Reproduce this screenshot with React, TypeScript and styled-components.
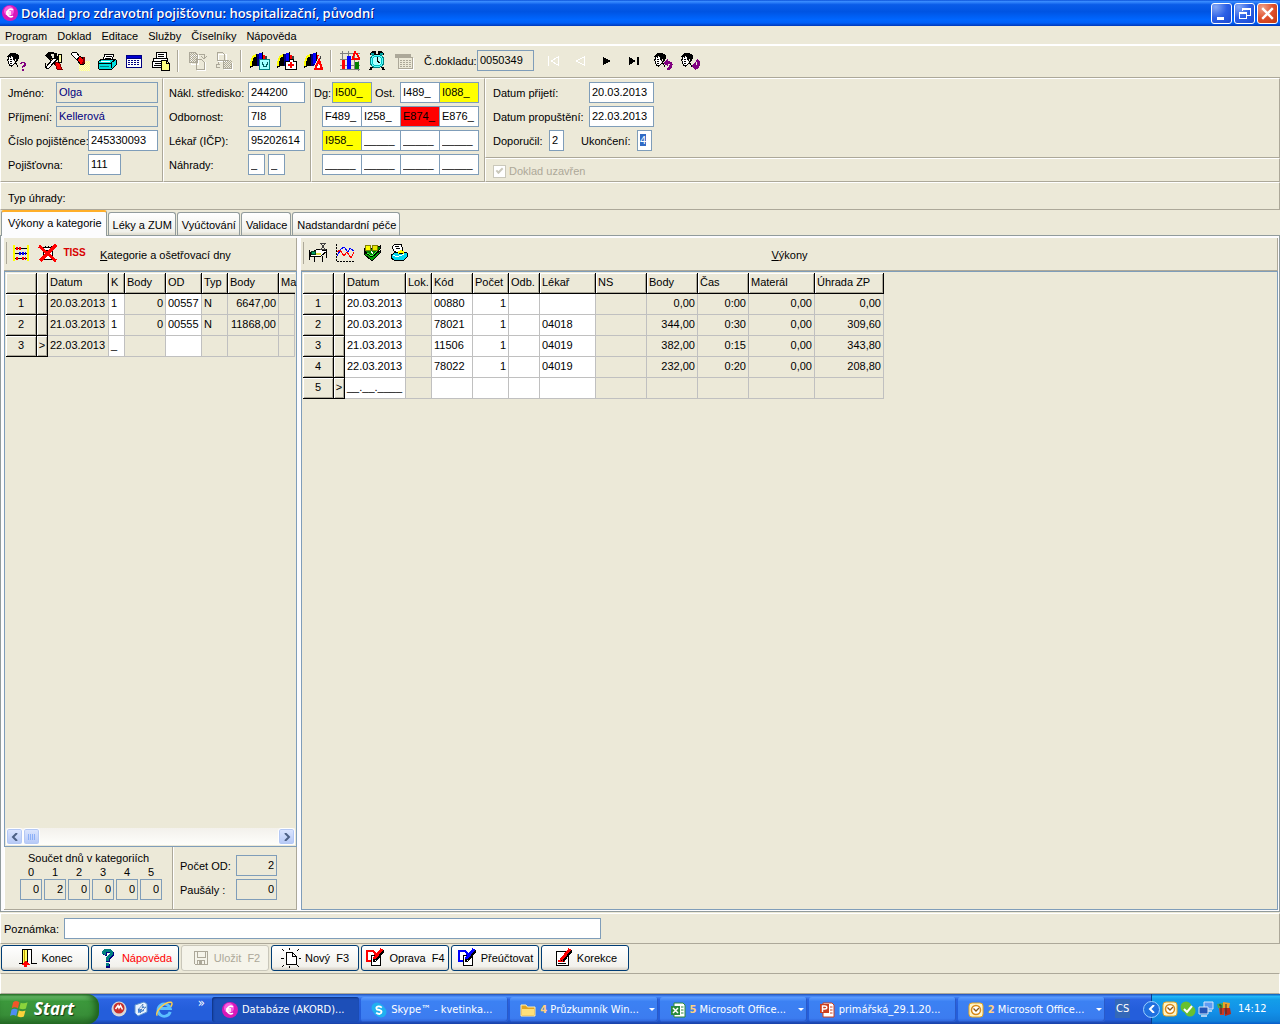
import React, { useEffect, useRef } from "react";
import styled, { createGlobalStyle, css } from "styled-components";

const face = "#ece9d8";
const shade = "#aca899";
const fieldBorder = "#7f9db9";
const uiFont = '"Liberation Sans", Arial, sans-serif';
const shellFont = '"DejaVu Sans Condensed", "DejaVu Sans", Tahoma, sans-serif';

const Global = createGlobalStyle`
  *, *::before, *::after { box-sizing: border-box; }
  body { margin: 0; background: ${face}; color: #000; font: 11px/14px ${uiFont}; }
  button, input { font: inherit; color: inherit; }
  input::selection { background: #316ac5; color: #fff; }
`;

/* ---------- icons ---------- */

type IconProps = { w?: number; h?: number; children: React.ReactNode };
const Icon = ({ w = 20, h = 20, children }: IconProps) => (
  <svg width={w} height={h} viewBox={`0 0 ${w} ${h}`} shapeRendering="crispEdges" fill="none" aria-hidden="true">
    {children}
  </svg>
);

const headRows = [
  "...######....",
  "..#########..",
  ".###########.",
  "####.#######.",
  ".#.#..######.",
  ".#....######.",
  "##.##.##.##..",
  "#......#.##..",
  ".#.##...##...",
  ".#......#....",
  ".#.##..###...",
  "..#...#..#...",
  "..####....#..",
  "....#.....#..",
];
const toPath = (rows: string[], mark: string) =>
  rows
    .flatMap((row, y) => [...row].map((c, x) => (c === mark ? `M${x} ${y}h1v1h-1z` : "")))
    .join("");
const headPath = toPath(headRows, "#");
const Head = () => (
  <g transform="translate(0 2)">
    <path d="M2 4h5v8H2z" fill="#fff" />
    <path d={headPath} fill="#000" />
  </g>
);
const Dither = ({ x, y, w, h, color }: { x: number; y: number; w: number; h: number; color: string }) => {
  let d = "";
  for (let r = 0; r < h; r++) for (let c = r % 2; c < w; c += 2) d += `M${x + c} ${y + r}h1v1h-1z`;
  return <path d={d} fill={color} />;
};

const HeadQuestion = () => (
  <Icon><Head /><path d="M14 11h4v1h1v3h-1v1h-2v1h-1v-2h1v-1h1v-2h-2v1h-2v-1h1zM15 18h2v2h-2z" fill="#800080" /></Icon>
);
const Tools = () => (
  <Icon>
    <path d="M5 5l8 8" stroke="#000" strokeWidth="3" />
    <path d="M6 6l7 7" stroke="#c08040" strokeWidth="1" />
    <path d="M2 4l3-3h6v2H8l1 3-3 3z" fill="#000" />
    <path d="M11 2h3v3h2v3l-3 2-2-2z" fill="#000" />
    <path d="M12 8l-8 9" stroke="#000" strokeWidth="4" />
    <path d="M12 8l-8 9" stroke="#fff" strokeWidth="2" />
    <path d="M2 12v4l3 2 2-2" stroke="#000" />
    <path d="M12 11h4l3 7h-5z" fill="#f00" stroke="#800000" />
    <path d="M15 3h3v8h-3z" fill="#ffffa0" stroke="#000" />
  </Icon>
);
const Flashlight = () => (
  <Icon>
    <path d="M9 10h11v10H9z" fill="#ffff8c" />
    <Dither x={9} y={10} w={11} h={10} color="#fffcc8" />
    <path d="M1 3l2-2h3l4 5-3 3z" fill="#fff" stroke="#000" />
    <path d="M7 9l3-4 5 4-1 4-3 1z" fill="#f00" stroke="#000" />
    <path d="M14 6v5l-2 2" stroke="#800000" strokeWidth="2" />
  </Icon>
);
const Printer = () => (
  <Icon>
    <path d="M6 9l2-6h9l-2 6z" fill="#fff" stroke="#000" />
    <path d="M9 5h6M8 7h6" stroke="#000" />
    <path d="M1 11l4-3h12l2 1v5l-4 4H2l-1-2z" fill="#00e0e0" stroke="#000" />
    <path d="M2 12h12l4-3M14 12v5" stroke="#000" />
    <path d="M3 15h9" stroke="#008080" />
    <path d="M4 10h9" stroke="#fff" />
  </Icon>
);
const TableIcon = () => (
  <Icon>
    <path d="M2 4h16v13H2z" fill="#000080" /><path d="M3 5h14v2H3z" fill="#0000d0" />
    <path d="M3 8h14v8H3z" fill="#fff" />
    <path d="M4 9.500h12M4 11.500h12M4 13.500h12" stroke="#000080" strokeDasharray="2 1" />
  </Icon>
);
const PrintNote = () => (
  <Icon>
    <path d="M5.500 1.500h10v6h-10z" fill="#fff" stroke="#000" /><path d="M7 3.500h6M7 5.500h6" stroke="#000" />
    <path d="M2.500 7.500h14v3h-14zM1.500 10.500h15v6h-15z" fill="#fff" stroke="#000" /><path d="M4 12.500h6M3 14.500h7" stroke="#000" />
    <path d="M10.500 9.500h5l3 3v7h-8z" fill="#ffff80" stroke="#000" /><path d="M15.500 9v3.500H19" stroke="#000" />
  </Icon>
);
const CopyOff = ({ flip }: { flip?: boolean }) => (
  <Icon>
    <path d={flip ? "M4 3h8v7H4z" : "M4 4h7v9H4z"} stroke="#fff" />
    {!flip && <Dither x={2} y={2} w={8} h={9} color="#aca899" />}
    {flip && <Dither x={10} y={9} w={8} h={8} color="#aca899" />}
    <path d={flip ? "M3.500 1.500h5l2 2v6h-7zM9.500 9.500h5l3 3v5h-8z" : "M2.500 1.500h6l2 2v8h-8zM9.500 8.500h5l3 3v7h-8z"} stroke="#aca899" />
    <path d={flip ? "M6 13H2v3h4M4 11v3" : "M12 3h5v4M14 5l3 3 3-3"} stroke="#aca899" />
    <path d={flip ? "M18.500 12v6.500H10" : "M18.500 11v8.500H10"} stroke="#fff" />
  </Icon>
);
const Books = () => (
  <>
    <path d="M0 17V11l2-5 3-3h2v12H4z" fill="#000" />
    <path d="M1 15v-4l2-5 3-2" stroke="#ff0" strokeWidth="2" />
    <path d="M6 3h5v12H6z" fill="#000080" /><path d="M9 2h3v11H9z" fill="#00f" />
    <path d="M6 3v12" stroke="#000" />
    <path d="M13 4h2v8h-2z" fill="#f00" /><path d="M12.500 1v11" stroke="#000" /><path d="M15 5h2v7h-2z" fill="#404040" />
  </>
);
const BooksBox = () => (
  <Icon><Books /><path d="M9.500 8.500h10v10h-10z" fill="#a0ffff" stroke="#008080" /><path d="M12 11v2h1v2h3v-2h1v-2" stroke="#006060" /></Icon>
);
const BooksKit = () => (
  <Icon><Books /><path d="M12.500 8.500h4v2h3v8h-11v-8h4z" fill="#fff" stroke="#000" /><path d="M13 11h2v2h2v2h-2v2h-2v-2h-2v-2h2z" fill="#f00" /></Icon>
);
const BooksTri = () => (
  <Icon><Books /><path d="M15 8l-5 11h9z" fill={face} stroke={face} strokeWidth="3" /><path d="M15 9l-4 9h7z" fill="#fff" stroke="#f00" strokeWidth="2" /></Icon>
);
const GridChart = () => (
  <Icon>
    <path d="M2.500 0v19M8.500 0v19M14.500 0v19M0 2.500h20M0 8.500h12M0 14.500h20M0 18.500h20M18.500 10v10" stroke="#808080" />
    <path d="M2 9h3v9H2z" fill="#f00" /><path d="M7 5h4v13H7z" fill="#00f" /><path d="M15 11h4v7h-4z" fill="#008000" />
    <path d="M15.500 0l-3 8h7l-3-6" stroke="#f00" strokeWidth="2" />
  </Icon>
);
const Alarm = () => (
  <Icon>
    <path d="M3 4l3-3h2v2M17 4l-3-3h-2v2M5 16l-2 3M15 16l2 3" stroke="#000" strokeWidth="2" />
    <circle cx="10" cy="10" r="7" fill="#5ff" stroke="#008080" strokeWidth="1" />
    <circle cx="10" cy="10" r="5" fill="#aff" stroke="#00c0c0" /><path d="M10 6v4l3 2" stroke="#000" /><path d="M7 3h6" stroke="#000" />
    <path d="M4 2h3v2H4zM13 2h3v2h-3z" fill="#00a0a0" />
  </Icon>
);
const WindowOff = () => (
  <Icon>
    <path d="M1.500 3.500h15v3h-15zM4.500 6.500h14v11h-14z" stroke="#aca899" fill={face} /><path d="M2 4h14v2H2z" fill="#aca899" />
    <path d="M5 18.500h14.500V7" stroke="#fff" /><path d="M6 9.500h11M6 11.500h11M6 13.500h11M6 15.500h11" stroke="#aca899" strokeDasharray="2 1" />
  </Icon>
);
const NavIcon = ({ kind }: { kind: "first" | "prev" | "next" | "last" }) => (
  <Icon w={14} h={12}>
    {kind === "first" && <path d="M2.500 1v10M12 2l-7 4 7 4z" stroke="#fff" />}
    {kind === "prev" && <path d="M11 2L3 6l8 4z" stroke="#fff" />}
    {kind === "next" && <path d="M3 2v8l8-4z" fill="#000" />}
    {kind === "last" && <path d="M2 2v8l7-4zM10 2h2v8h-2z" fill="#000" />}
  </Icon>
);
const HeadTurn = ({ down }: { down?: boolean }) => (
  <Icon>
    <Head />
    <path d={down ? "M16 9q4 4 0 7h-2" : "M13 12q5-1 4 3l-3 4"} stroke="#800080" strokeWidth="3" />
    <path d={down ? "M15 11v8l-5-4z" : "M9 12l5-4v7z"} fill="#800080" />
  </Icon>
);
const Abacus = () => (
  <Icon>
    <path d="M2 2h2v16H2zM16 2h2v16h-2z" fill="#ff0" /><path d="M4 5.500h12M4 10.500h12M4 15.500h12" stroke="#000" />
    <path d="M5 5.500h6M5 15.500h3M11 15.500h4" stroke="#f00" strokeWidth="3" strokeDasharray="2 1" /><path d="M8 10.500h7" stroke="#00f" strokeWidth="3" strokeDasharray="2 1" />
  </Icon>
);
const CrossedBox = () => (
  <Icon>
    <path d="M5.500 4.500h9v12h-9z" fill="#fff" stroke="#000" />
    <path d="M5 7.500h10M7 3v2M10 3v2M13 3v2" stroke="#000" /><path d="M1 3l17 15M18 2L2 18" stroke="#f00" strokeWidth="3" />
  </Icon>
);
const Bed = () => (
  <Icon>
    <path d="M1.500 7v10M2 13h11l5-4M6.500 14v5M14.500 13v6M18.500 6v9" stroke="#000" />
    <path d="M2 10l8-4 9 2-6 5H3z" fill="#fff" stroke="#000" /><path d="M3 8h5v4H3z" fill="#004020" /><path d="M4 9h3v2H4z" fill="#00a060" />
    <path d="M8 10h5v2H8z" fill="#e0e040" />
    <path d="M12 .5h6M12 6.500h6M13 1l4 5M17 1l-4 5" stroke="#404040" />
  </Icon>
);
const LineChart = () => (
  <Icon>
    <path d="M1.500 1v17.500H19" stroke="#000" strokeDasharray="2 1" />
    <path d="M2 13l4-7 3-2 4 5 2-4 4 3" stroke="#00f" strokeWidth="1" /><path d="M2 9l3-2 4 6 3-4 4 6 3-6" stroke="#f00" strokeWidth="1" />
  </Icon>
);
const Money = () => (
  <Icon>
    <path d="M2 11l8 7 8-8v-2l-8 6-8-5z" fill="#00a000" stroke="#000" />
    <path d="M2 8l8 6 8-8V3l-8 2-8 1z" fill="#008000" stroke="#000" />
    <path d="M5 10l5 3 6-6" stroke="#40ff40" />
    <circle cx="6" cy="5" r="3" fill="#ff0" stroke="#808000" /><circle cx="13" cy="5" r="3" fill="#e8e800" stroke="#808000" />
    <path d="M9 9l2 1" stroke="#fff" strokeWidth="2" />
  </Icon>
);
const PhonePaper = () => (
  <Icon>
    <path d="M3 4l3-3h6l2 6-3 4-6-3z" fill="#fff" stroke="#000" /><path d="M6 3.500h4M7 5.500h4" stroke="#000" />
    <path d="M2 12l5-3 5 2 3-2 3 1v4l-4 4-9-1-3-2z" fill="#00d8f0" stroke="#000" />
    <path d="M4 12l4 2 7-3" stroke="#fff" /><path d="M9 10l3-2 3 2" stroke="#ff0" strokeWidth="2" />
  </Icon>
);
const Door = () => (
  <Icon>
    <path d="M2 15.500h3.500v-14h9v14H20" stroke="#000" /><path d="M6 2h4v13H6z" fill="#ffff60" /><path d="M10.500 2v14" stroke="#000" /><path d="M11 2h3v13h-3z" fill="#fff" />
    <path d="M7 2v13" stroke="#c0a000" />
    <path d="M7 19h3v-2h3l-4-5-5 5h3z" fill="#f00" />
  </Icon>
);
const Question = () => (
  <Icon>
    <path d="M5 7V4l3-2h5l3 2v4l-4 3v3H8v-4l4-3V5H9v3zM8 16h4v4H8z" fill="#000080" />
    <path d="M4 6V3l3-2h5l3 2v4l-4 3v3H8v-4l4-3V4H8v3zM8 15h3v3H8z" fill="#008080" />
  </Icon>
);
const Disk = () => (
  <Icon>
    <path d="M4.500 3.500h13v13h-12l-1-1zM7.500 4v5h8V4M7.500 16v-4h7v4" stroke="#aca899" />
    <path d="M9 13h3v3H9z" fill="#aca899" />
  </Icon>
);
const NewPage = () => (
  <Icon>
    <path d="M5.500 4.500h6l4 4v8h-10zM11.500 4v4.500H16" fill="#fff" stroke="#000" />
    <path d="M1 1l2 2M8.500 0v2M18 1l-2 2M0 10.500h3M18 10.500h2M1 19l2-2M18 19l-2-2M8.500 18v2" stroke="#000" />
  </Icon>
);
const Edit = ({ color }: { color: string }) => (
  <Icon>
    <path d="M2 3h6l2 2v8H2z" fill="#fff" stroke={color} strokeWidth="2" />
    <path d="M6.500 7.500h9v10h-9z" fill="#fff" stroke="#000" />
    <path d="M10 12l8-10" stroke="#000" strokeWidth="4" /><path d="M9 11l8-10" stroke={color} strokeWidth="3" /><path d="M8 10v4h3z" fill="#000" />
  </Icon>
);
const Correct = () => (
  <Icon>
    <path d="M3.500 3.500h12v14h-12z" fill="#fff" stroke="#000" /><path d="M5 15.500h8" stroke="#000" />
    <path d="M5 13h7" stroke="#f00" strokeWidth="2" /><path d="M9 13l9-11" stroke="#000" strokeWidth="4" /><path d="M8 12l9-11" stroke="#f00" strokeWidth="3" />
  </Icon>
);

const Smooth = ({ children, s = 16 }: { children: React.ReactNode; s?: number }) => (
  <svg width={s} height={s} viewBox="0 0 16 16" fill="none" aria-hidden="true">{children}</svg>
);
const Akord = ({ s }: { s?: number }) => (
  <Smooth s={s}>
    <circle cx="8" cy="8" r="8" fill="#d818b8" /><circle cx="7" cy="6" r="5" fill="#f85ce0" />
    <path d="M11 4.800A3.800 3.800 0 1 0 11 11.200M4 7h5M4 9h5" stroke="#fff" strokeWidth="1.600" />
  </Smooth>
);
const Flag = () => (
  <Smooth s={22}>
    <path d="M3 3q2-1.500 4.500 0l-1 4.500Q4 6 2 7.500z" fill="#f0562a" /><path d="M8.500 3.400q2.500 1 5-.4l-1.200 4.600q-2 1.200-4.800 0z" fill="#8bd33c" />
    <path d="M1.800 8.600q2-1.500 4.500 0L5.200 13Q3 11.600.8 13z" fill="#4d8df5" /><path d="M7.200 9q2.400 1.200 4.800 0l-1.200 4.500q-2.200 1.200-4.700-.2z" fill="#fbd23c" />
  </Smooth>
);
const RedBall = () => (
  <Smooth><circle cx="8" cy="8" r="7.500" fill="#d8d8d8" /><circle cx="8" cy="7" r="5.500" fill="#c8302c" /><path d="M4.500 8L7 4.500 8 7l1.500-2.500 2 4" stroke="#fff" strokeWidth="1.500" /></Smooth>
);
const DesktopIcon = () => (
  <Smooth><path d="M2 4l9-3 3 2v8l-9 4-3-3z" fill="#e8f2ff" stroke="#5e93cf" /><path d="M5 8l6-3v5l-6 2z" fill="#4a8be0" /><path d="M10 3l-5 6 4-1-2 4 6-6-4 1z" fill="#fff" stroke="#245ea8" strokeWidth=".6" /></Smooth>
);
const Explorer = () => (
  <Smooth s={18}>
    <path d="M13.500 10.500A5.500 5.500 0 1 1 13.500 7.500H4.500" stroke="#5cc0ff" strokeWidth="2.600" />
    <path d="M2 14C-1 11 9 1 14.500 2q1.500 1-.5 4" stroke="#ffce4a" strokeWidth="1.300" />
  </Smooth>
);
const SkypeIcon = () => (
  <Smooth><circle cx="6" cy="6" r="5.500" fill="#20b0f0" /><circle cx="10" cy="10" r="5.500" fill="#20b0f0" /><circle cx="8" cy="8" r="6" fill="#20b0f0" />
    <path d="M10.800 5.600Q8.500 3.800 6.500 4.600T6 7.500q4.500.8 4.600 2.200T8.500 12Q6.500 12 5.200 10.600" stroke="#fff" strokeWidth="1.800" /></Smooth>
);
const Folder = () => (
  <Smooth><path d="M1 3h5l1.500 2H15v9H1z" fill="#e0a526" stroke="#fff0b0" /><path d="M2 7h12v6H2z" fill="#ffe07a" /></Smooth>
);
const Office = ({ kind }: { kind: "excel" | "ppt" | "outlook" }) => {
  const color = { excel: "#2c8a3c", ppt: "#cc4020", outlook: "#e8a820" }[kind];
  return (
    <Smooth>
      {kind === "outlook" ? (
        <><rect x="1" y="1" width="14" height="14" rx="3" fill="#fff4c4" stroke={color} /><circle cx="8" cy="8" r="4.500" fill="#fff" stroke="#d88818" strokeWidth="1.500" /><path d="M5.500 6.500l2.500 2.500 3-3" stroke="#8c5810" strokeWidth="1.300" /></>
      ) : (
        <><path d="M4 1h9l2 2v12H4z" fill="#fff" stroke={color} /><path d={kind === "excel" ? "M1 4h9v9H1z" : "M1 2h9v9H1z"} fill={color} />{kind === "excel" ? <path d="M3 6l5 5M8 6l-5 5" stroke="#fff" strokeWidth="1.500" /> : <path d="M3.500 10V4h2.300q2 0 2 1.500T5.800 7H4" stroke="#fff" strokeWidth="1.400" />}<path d="M11 5h2.500M11 8h2.500M11 11h2.500" stroke={color} /></>
      )}
    </Smooth>
  );
};
const CheckBall = () => (
  <Smooth><circle cx="6" cy="6" r="5.500" fill="#68c030" /><circle cx="10" cy="10" r="5.500" fill="#68c030" /><path d="M4 8l3 3 5-6" stroke="#fff" strokeWidth="2" /></Smooth>
);
const Network = () => (
  <Smooth><path d="M6 1h9v7H6z" fill="#5e9cf4" stroke="#dce8f8" /><path d="M1 6h9v7H1z" fill="#2458b8" stroke="#dce8f8" /><path d="M3 15h6M10 10h4" stroke="#dce8f8" strokeWidth="1.500" /></Smooth>
);
const Puzzle = () => (
  <Smooth><path d="M1 3l6-1v5H2z" fill="#48a848" /><path d="M7 1l7 1-1 5H7z" fill="#f0a028" /><path d="M3 7h5v7H4z" fill="#d03820" /><path d="M8 7h6l1 6-6 2z" fill="#b82818" /><path d="M3 4h2v9M10 3v10" stroke="#333" /></Smooth>
);
const Chevron = ({ left, color = "#4d6185" }: { left?: boolean; color?: string }) => (
  <svg width="8" height="8" viewBox="0 0 8 8" fill="none" aria-hidden="true">
    <path d={left ? "M6 0L2 4l4 4" : "M2 0l4 4-4 4"} stroke={color} strokeWidth="2" />
  </svg>
);

/* ---------- window frame ---------- */

const Screen = styled.div`
  min-height: 100vh;
  display: flex;
  flex-direction: column;
`;
const raised = css`
  border: 1px solid;
  border-color: #fff ${shade} ${shade} #fff;
`;
const TitleBar = styled.header`
  display: flex;
  align-items: center;
  gap: 3px;
  height: 26px;
  padding: 0 2px;
  background: linear-gradient(#0a50d8 0%, #3a8cff 6%, #0a5ce8 18%, #0054e3 45%, #0066ff 75%, #0060f8 88%, #0038b8 100%);
  h1 {
    flex: 1;
    margin: 0;
    color: #fff;
    font: 600 13px/18px "Open Sans", "Noto Sans", sans-serif;
    text-shadow: 1px 1px #0a1883;
  }
`;
const CaptionButtons = styled.div`
  display: flex;
  gap: 2px;
`;
const CaptionButton = styled.button<{ $close?: boolean }>`
  display: grid;
  place-items: center;
  width: 21px;
  height: 21px;
  padding: 0;
  border: 1px solid #fff;
  border-radius: 3px;
  background: ${(p) => (p.$close ? "radial-gradient(circle at 25% 20%, #f0a088, #e0502c 50%, #c03810)" : "radial-gradient(circle at 20% 15%, #85a8f5, #2c60e6 50%, #1a48d0)")};
`;
const MenuBar = styled.nav`
  display: flex;
  height: 20px;
  padding: 0 1px;
  border-bottom: 2px solid #fff;
`;
const MenuItem = styled.button`
  padding: 1px 4px 0 4px;
  margin-right: 2px;
  border: 0;
  background: none;
`;
const ToolBar = styled.div`
  display: flex;
  align-items: center;
  height: 32px;
  padding: 0 3px 2px;
  border-bottom: 1px solid ${shade};
`;
const ToolButton = styled.button`
  display: grid;
  place-items: center;
  width: 27px;
  height: 26px;
  padding: 0;
  border: 0;
  background: none;
`;
const Gap = styled.span<{ $line?: boolean; $w?: number }>`
  width: ${(p) => p.$w ?? 9}px;
  height: 22px;
  padding-left: 3px;
  &::before {
    content: "";
    display: ${(p) => (p.$line ? "block" : "none")};
    width: 2px;
    height: 22px;
    border-left: 1px solid ${shade};
    border-right: 1px solid #fff;
  }
`;

/* ---------- form ---------- */

const FormStrip = styled.form`
  display: flex;
  height: 104px;
`;
const FormPanel = styled.fieldset<{ $w?: number; $pad?: string }>`
  ${raised}
  display: flex;
  flex-direction: column;
  gap: 3px;
  min-width: 0;
  margin: 0;
  padding: ${(p) => p.$pad ?? "3px 4px 3px 7px"};
  ${(p) => (p.$w ? `width: ${p.$w}px; flex: none;` : "flex: 1;")}
`;
const DatePanel = styled(FormPanel)`
  flex: none;
  height: 80px;
`;
const Row = styled.div<{ $end?: boolean }>`
  display: flex;
  align-items: center;
  justify-content: ${(p) => (p.$end ? "flex-end" : "flex-start")};
  height: 21px;
`;
const Label = styled.label<{ $w?: number }>`
  flex: none;
  width: ${(p) => (p.$w ? `${p.$w}px` : "auto")};
  white-space: nowrap;
`;
const Field = styled.input<{ $w?: number; $bg?: string; $color?: string; $right?: boolean; $join?: boolean }>`
  width: ${(p) => (p.$w ? `${p.$w}px` : "auto")};
  min-width: 0;
  height: 21px;
  margin: 0 0 0 ${(p) => (p.$join ? "-1px" : "0")};
  padding: 0 2px 2px;
  border: 1px solid ${fieldBorder};
  border-radius: 0;
  outline: none;
  background: ${(p) => p.$bg ?? "#fff"};
  color: ${(p) => p.$color ?? "#000"};
  text-align: ${(p) => (p.$right ? "right" : "left")};
  &[data-grow] { flex: 0 1 537px; }
`;
const Spacer = styled.span<{ $w: number }>`
  width: ${(p) => p.$w}px;
`;
const DateSide = styled.div`
  flex: 1;
  min-width: 0;
  display: flex;
  flex-direction: column;
`;
const CheckPanel = styled.div`
  ${raised}
  display: flex;
  align-items: center;
  flex: 1;
  padding: 2px 0 0 7px;
  color: ${shade};
  label { display: flex; align-items: center; gap: 3px; }
  input {
    appearance: none;
    display: grid;
    place-items: center;
    width: 13px;
    height: 13px;
    margin: 0;
    border: 1px solid #cac8bb;
    background: #fff;
  }
  input:checked::after {
    content: "";
    width: 7px;
    height: 4px;
    border: solid #cac8bb;
    border-width: 0 0 2px 2px;
    transform: rotate(-45deg);
    margin-bottom: 2px;
  }
`;
const PaymentStrip = styled.div`
  ${raised}
  display: flex;
  align-items: center;
  height: 28px;
  padding: 3px 7px 0;
`;

/* ---------- tabs and panes ---------- */

const TabList = styled.div`
  display: flex;
  align-items: flex-end;
  height: 25px;
  padding-left: 1px;
  gap: 1px;
  position: relative;
  z-index: 1;
`;
const Tab = styled.button<{ $active?: boolean }>`
  height: 23px;
  padding: 2px 3px 0 4px;
  border: 1px solid #919b9c;
  border-bottom: 0;
  border-radius: 3px 3px 0 0;
  background: linear-gradient(#fff, #f0f0ea 85%, #dedbcc);
  white-space: nowrap;
  ${(p) =>
    p.$active &&
    css`
      height: 26px;
      margin-bottom: -1px;
      padding: 0 4px 2px 6px;
      border-top: 2px solid #ffae29;
      background: #fcfcfe;
    `}
`;
const TabPane = styled.main`
  flex: 1;
  display: flex;
  gap: 4px;
  padding: 2px 1px 1px 3px;
  border: 1px solid #919b9c;
  background: #fcfcfe;
`;
const Section = styled.section<{ $w?: number }>`
  display: flex;
  flex-direction: column;
  min-width: 0;
  ${(p) => (p.$w ? `width: ${p.$w}px; flex: none;` : "flex: 1;")}
`;
const SectionBar = styled.div`
  display: flex;
  align-items: center;
  height: 33px;
  padding: 0 2px 2px;
  background: ${face};
  border-right: 1px solid ${shade};
  border-bottom: 1px solid ${shade};
  &::before { content: ""; width: 1px; height: 22px; background: ${shade}; }
  h2 { margin: 4px 0 0 12px; font: inherit; white-space: nowrap; }
  h2[data-center] { flex: 1; margin-left: 0; padding-right: 108px; text-align: center; }
`;
const TissLabel = styled.span`
  color: #d80000;
  font: bold 10px/14px ${uiFont};
`;
const GridFrame = styled.div`
  flex: 1;
  display: flex;
  flex-direction: column;
  justify-content: space-between;
  padding: 1px;
  border: 1px solid ${fieldBorder};
  background: ${face};
`;
const DataTable = styled.table`
  flex: none;
  align-self: flex-start;
  table-layout: fixed;
  border-collapse: separate;
  border-spacing: 0;
  th, td {
    height: 21px;
    padding: 0 2px 2px;
    border: solid #c0c0c0;
    border-width: 0 1px 1px 0;
    font-weight: normal;
    text-align: left;
    white-space: nowrap;
  }
  th {
    border-color: #000;
    box-shadow: inset 1px 1px #fff, inset -1px -1px ${shade};
  }
  tbody th { text-align: center; padding: 0 0 2px; }
`;
const Cell = styled.td<{ $white?: boolean; $num?: boolean }>`
  && {
    background: ${(p) => (p.$white ? "#fff" : face)};
    text-align: ${(p) => (p.$num ? "right" : "left")};
  }
`;
const HeadCell = styled.th<{ $open?: boolean }>`
  && {
    ${(p) => p.$open && `border-right: 0; box-shadow: inset 1px 1px #fff, inset 0 -1px ${shade};`}
  }
`;
const ScrollBar = styled.div`
  display: flex;
  height: 17px;
  background: linear-gradient(#f3f1ec, #fefefb);
  button {
    display: grid;
    place-items: center;
    width: 17px;
    height: 17px;
    padding: 0;
    border: 1px solid #fff;
    border-radius: 3px;
    background: linear-gradient(#dce6ff, #b5c8f6);
    box-shadow: inset 0 0 0 1px #b4c8f4;
  }
  button:last-child { margin-left: auto; }
`;
const Totals = styled.div`
  display: flex;
  height: 63px;
`;
const TotalsPanel = styled.div<{ $w?: number }>`
  border: solid ${shade};
  border-width: 0 1px 1px 0;
  box-shadow: inset 1px 0 #fff;
  background: ${face};
  ${(p) => (p.$w ? `width: ${p.$w}px;` : "flex: 1;")}
  display: flex;
  flex-direction: column;
  padding: 4px 10px 0 16px;
`;
const DayTitle = styled.div`
  padding-left: 8px;
`;
const DayBoxes = styled.div`
  display: flex;
  gap: 2px;
  label { display: flex; flex-direction: column; width: 22px; text-align: center; }
`;
const SideTotals = styled(TotalsPanel)`
  padding: 8px 0 0 7px;
  gap: 3px;
`;

/* ---------- bottom ---------- */

const NoteStrip = styled.div`
  ${raised}
  display: flex;
  align-items: center;
  height: 31px;
  margin-top: 1px;
  padding: 0 3px;
`;
const ActionBar = styled.div`
  display: flex;
  gap: 2px;
  height: 29px;
  padding: 1px 1px 2px;
`;
const ActionButton = styled.button<{ $color?: string }>`
  display: flex;
  align-items: center;
  justify-content: center;
  gap: 4px;
  width: 88px;
  height: 26px;
  padding: 0;
  border: 1px solid #003c74;
  border-radius: 3px;
  background: linear-gradient(#fff, #f2f1ec 85%, #d6d0c5);
  color: ${(p) => p.$color ?? "#000"};
  white-space: pre;
  &:disabled { border-color: #c9c7ba; background: #f5f4ea; color: ${shade}; }
`;
const StatusBar = styled.footer`
  height: 21px;
  border: 1px solid;
  border-color: ${shade} #fff ${shade} #fff;
`;

/* ---------- taskbar ---------- */

const TaskBar = styled.div`
  display: flex;
  height: 30px;
  color: #fff;
  font: 11px/14px ${shellFont};
  background: linear-gradient(#1f50b8 0%, #4a8cf8 8%, #2b64e2 18%, #245edb 50%, #245edb 85%, #1941a5 100%);
`;
const StartButton = styled.button`
  display: flex;
  align-items: center;
  gap: 3px;
  width: 99px;
  padding: 0 0 1px 9px;
  border: 0;
  border-radius: 0 12px 12px 0;
  background: linear-gradient(#2f7a2f 0%, #6cc06c 8%, #3c983c 25%, #388e38 70%, #2a702a 100%);
  box-shadow: inset -4px 0 6px #1e601e;
  color: #fff;
  font: italic bold 17px/20px "Open Sans", "Noto Sans", sans-serif;
  text-shadow: 1px 1px 1px #143c14;
`;
const QuickLaunch = styled.div`
  display: flex;
  align-items: center;
  gap: 6px;
  width: 113px;
  padding-left: 12px;
  span { margin: -12px 0 0 auto; padding-right: 7px; font-size: 13px; }
`;
const Tasks = styled.div`
  flex: 1;
  min-width: 0;
  display: grid;
  grid-template-columns: repeat(6, minmax(0, 1fr));
  gap: 2px;
  padding-top: 3px;
`;
const Task = styled.button<{ $active?: boolean }>`
  display: flex;
  align-items: center;
  gap: 4px;
  height: 25px;
  min-width: 0;
  padding: 0 3px 0 10px;
  border: 0;
  border-radius: 3px;
  background: ${(p) => (p.$active ? "#1d4fb8" : "linear-gradient(#5c9cff, #3c81f3 18%, #3c7cf0 85%, #2c62d8)")};
  box-shadow: ${(p) => (p.$active ? "inset 1px 1px 2px #0e3180" : "inset -1px -1px #2a5ac8")};
  color: #fff;
  white-space: nowrap;
  b { color: #ffd080; }
  span { flex: 1; min-width: 0; overflow: hidden; text-align: left; }
  i { border: solid transparent; border-width: 3px 3px 0; border-top-color: #fff; }
`;
const Language = styled.div`
  width: 46px;
  padding: 8px 0 0 10px;
  span { padding: 3px 1px; background: #3468b8; }
`;
const Tray = styled.div`
  display: flex;
  align-items: center;
  gap: 2px;
  width: 129px;
  border-left: 1px solid #0a3e90;
  background: linear-gradient(#0c59b9 0%, #22b8f8 8%, #139ee9 18%, #1290e8 60%, #0f80d8 90%, #095bc9 100%);
  time { margin-left: 4px; }
`;
const TrayArrow = styled.button`
  display: grid;
  place-items: center;
  flex: none;
  width: 17px;
  height: 17px;
  margin-left: -9px;
  padding: 0;
  border: 1px solid #9cd0ff;
  border-radius: 50%;
  background: #2070e0;
`;

/* ---------- data ---------- */

type Column = { name: string; w: number; white?: boolean; num?: boolean; open?: boolean };
const categoryColumns: Column[] = [
  { name: "Datum", w: 61 }, { name: "K", w: 16, white: true }, { name: "Body", w: 41, num: true },
  { name: "OD", w: 36, white: true }, { name: "Typ", w: 26 }, { name: "Body", w: 51, num: true }, { name: "Ma", w: 16, open: true },
];
const categoryRows = [
  ["20.03.2013", "1", "0", "00557", "N", "6647,00", ""],
  ["21.03.2013", "1", "0", "00555", "N", "11868,00", ""],
  ["22.03.2013", "_", "", "", "", "", ""],
];
const actColumns: Column[] = [
  { name: "Datum", w: 61, white: true }, { name: "Lok.", w: 26 }, { name: "Kód", w: 41, white: true },
  { name: "Počet", w: 36, white: true, num: true }, { name: "Odb.", w: 31, white: true }, { name: "Lékař", w: 56, white: true },
  { name: "NS", w: 51 }, { name: "Body", w: 51, num: true }, { name: "Čas", w: 51, num: true },
  { name: "Materál", w: 66, num: true }, { name: "Úhrada ZP", w: 69, num: true },
];
const actRows = [
  ["20.03.2013", "", "00880", "1", "", "", "", "0,00", "0:00", "0,00", "0,00"],
  ["20.03.2013", "", "78021", "1", "", "04018", "", "344,00", "0:30", "0,00", "309,60"],
  ["21.03.2013", "", "11506", "1", "", "04019", "", "382,00", "0:15", "0,00", "343,80"],
  ["22.03.2013", "", "78022", "1", "", "04019", "", "232,00", "0:20", "0,00", "208,80"],
  ["__.__.____", "", "", "", "", "", "", "", "", "", ""],
];

const Grid = ({ columns, rows }: { columns: Column[]; rows: string[][] }) => (
  <DataTable style={{ width: columns.reduce((sum, c) => sum + c.w, 42) }}>
    <colgroup>
      <col width={31} /><col width={11} />
      {columns.map((c, i) => <col key={i} width={c.w} />)}
    </colgroup>
    <thead>
      <tr><th /><th />{columns.map((c, i) => <HeadCell key={i} scope="col" $open={c.open}>{c.name}</HeadCell>)}</tr>
    </thead>
    <tbody>
      {rows.map((row, r) => (
        <tr key={r}>
          <th scope="row">{r + 1}</th>
          <th>{r === rows.length - 1 ? ">" : ""}</th>
          {row.map((v, i) => <Cell key={i} $white={columns[i].white} $num={columns[i].num}>{v}</Cell>)}
        </tr>
      ))}
    </tbody>
  </DataTable>
);

const tools = (items: [string, React.ReactNode, boolean?][]) =>
  items.map(([name, icon, off]) => <ToolButton key={name} type="button" aria-label={name} disabled={off}>{icon}</ToolButton>);

const diagnoses: [string, string?][][] = [
  [["F489_"], ["I258_"], ["E874_", "#f00"], ["E876_"]],
  [["I958_", "#ff0"], ["_____"], ["_____"], ["_____"]],
  [["_____"], ["_____"], ["_____"], ["_____"]],
];

export default function App() {
  const ending = useRef<HTMLInputElement>(null);
  useEffect(() => {
    ending.current?.focus();
    ending.current?.select();
  }, []);

  return (
    <Screen>
      <Global />
      <TitleBar>
        <Akord />
        <h1>Doklad pro zdravotní pojišťovnu: hospitalizační, původní</h1>
        <CaptionButtons>
          <CaptionButton aria-label="Minimalizovat"><Icon w={15} h={15}><path d="M3 11h7v3H3z" fill="#fff" /></Icon></CaptionButton>
          <CaptionButton aria-label="Obnovit"><Icon w={15} h={15}><path d="M5 5V2h8v7h-3M5 3h8M2.500 6.500h7v6h-7zM2 7h8" stroke="#fff" /></Icon></CaptionButton>
          <CaptionButton $close aria-label="Zavřít"><Smooth s={17}><path d="M3 3l10 10M13 3L3 13" stroke="#fff" strokeWidth="2.200" /></Smooth></CaptionButton>
        </CaptionButtons>
      </TitleBar>

      <MenuBar>
        {["Program", "Doklad", "Editace", "Služby", "Číselníky", "Nápověda"].map((m) => <MenuItem key={m}>{m}</MenuItem>)}
      </MenuBar>

      <ToolBar>
        {tools([["Pacient", <HeadQuestion />]])}
        <Gap />
        {tools([["Nastavení", <Tools />], ["Hledat", <Flashlight />], ["Tisk", <Printer />], ["Tabulka", <TableIcon />], ["Tisk sestavy", <PrintNote />]])}
        <Gap $line />
        {tools([["Kopírovat", <CopyOff />, true], ["Vložit", <CopyOff flip />, true]])}
        <Gap $line />
        {tools([["Výkony", <BooksBox />], ["Zdravotní číselník", <BooksKit />], ["Léky", <BooksTri />]])}
        <Gap $line />
        {tools([["Graf", <GridChart />], ["Čas", <Alarm />], ["Okno", <WindowOff />, true]])}
        <Gap $w={7} />
        <Label htmlFor="doc" $w={53}>Č.dokladu:</Label>
        <Field id="doc" $w={57} $bg={face} readOnly defaultValue="0050349" />
        <Gap $w={5} />
        {tools([["První", <NavIcon kind="first" />, true], ["Předchozí", <NavIcon kind="prev" />, true], ["Další", <NavIcon kind="next" />], ["Poslední", <NavIcon kind="last" />]])}
        <Gap $w={3} />
        {tools([["Předchozí pacient", <HeadTurn />], ["Další pacient", <HeadTurn down />]])}
      </ToolBar>

      <FormStrip>
        <FormPanel $w={163}>
          <Row><Label htmlFor="first" $w={48}>Jméno:</Label><Field id="first" $w={102} $bg={face} $color="#000080" readOnly defaultValue="Olga" /></Row>
          <Row><Label htmlFor="last" $w={48}>Příjmení:</Label><Field id="last" $w={102} $bg={face} $color="#000080" readOnly defaultValue="Kellerová" /></Row>
          <Row><Label htmlFor="insured" $w={80}>Číslo pojištěnce:</Label><Field id="insured" $w={70} defaultValue="245330093" /></Row>
          <Row><Label htmlFor="insurer" $w={80}>Pojišťovna:</Label><Field id="insurer" $w={33} defaultValue="111" /></Row>
        </FormPanel>
        <FormPanel $w={148} $pad="3px 4px 3px 5px">
          <Row><Label htmlFor="centre" $w={79}>Nákl. středisko:</Label><Field id="centre" $w={57} defaultValue="244200" /></Row>
          <Row><Label htmlFor="spec" $w={79}>Odbornost:</Label><Field id="spec" $w={33} defaultValue="7I8" /></Row>
          <Row><Label htmlFor="doctor" $w={79}>Lékař (IČP):</Label><Field id="doctor" $w={57} defaultValue="95202614" /></Row>
          <Row><Label htmlFor="comp" $w={79}>Náhrady:</Label><Field id="comp" $w={17} defaultValue="_" /><Spacer $w={3} /><Field aria-label="Náhrady 2" $w={17} defaultValue="_" /></Row>
        </FormPanel>
        <FormPanel $w={174} $pad="3px 5px 3px 2px">
          <Row $end>
            <Label htmlFor="dg" $w={18}>Dg:</Label><Field id="dg" $w={40} $bg="#ff0" defaultValue="I500_" />
            <Spacer $w={3} /><Label htmlFor="other" $w={25}>Ost.</Label>
            <Field id="other" $w={40} defaultValue="I489_" /><Field aria-label="Ost. 2" $w={40} $join $bg="#ff0" defaultValue="I088_" />
          </Row>
          {diagnoses.map((line, r) => (
            <Row key={r} $end>
              {line.map(([v, bg], i) => (
                <Field key={i} aria-label={`Diagnóza ${r + 1}.${i + 1}`} $w={40} $join={i > 0} $bg={bg} defaultValue={v} />
              ))}
            </Row>
          ))}
        </FormPanel>
        <DateSide>
          <DatePanel>
            <Row><Label htmlFor="in" $w={96}>Datum přijetí:</Label><Field id="in" $w={65} defaultValue="20.03.2013" /></Row>
            <Row><Label htmlFor="out" $w={96}>Datum propuštění:</Label><Field id="out" $w={65} defaultValue="22.03.2013" /></Row>
            <Row>
              <Label htmlFor="rec" $w={56}>Doporučil:</Label><Field id="rec" $w={15} defaultValue="2" />
              <Spacer $w={17} /><Label htmlFor="end" $w={56}>Ukončení:</Label><Field id="end" ref={ending} $w={15} defaultValue="4" />
            </Row>
          </DatePanel>
          <CheckPanel><label><input type="checkbox" checked disabled readOnly />Doklad uzavřen</label></CheckPanel>
        </DateSide>
      </FormStrip>
      <PaymentStrip>Typ úhrady:</PaymentStrip>

      <TabList role="tablist">
        <Tab role="tab" aria-selected $active>Výkony a kategorie</Tab>
        {["Léky a ZUM", "Vyúčtování", "Validace", "Nadstandardní péče"].map((t) => <Tab key={t} role="tab">{t}</Tab>)}
      </TabList>
      <TabPane>
        <Section $w={293}>
          <SectionBar>
            {tools([["Počítadlo", <Abacus />], ["Zrušit", <CrossedBox />], ["TISS", <TissLabel>TISS</TissLabel>]])}
            <h2><u>K</u>ategorie a ošetřovací dny</h2>
          </SectionBar>
          <GridFrame>
            <Grid columns={categoryColumns} rows={categoryRows} />
            <ScrollBar>
              <button aria-label="Vlevo"><Chevron left /></button>
              <button aria-label="Posuvník"><Icon w={9} h={8}><path d="M1.500 1v6M3.500 1v6M5.500 1v6M7.500 1v6" stroke="#8cb0f8" /></Icon></button>
              <button aria-label="Vpravo"><Chevron /></button>
            </ScrollBar>
          </GridFrame>
          <Totals>
            <TotalsPanel $w={169}>
              <DayTitle>Součet dnů v kategoriích</DayTitle>
              <DayBoxes>
                {[0, 2, 0, 0, 0, 0].map((v, i) => <label key={i}>{i}<Field $w={22} $bg={face} $right readOnly defaultValue={v} /></label>)}
              </DayBoxes>
            </TotalsPanel>
            <SideTotals>
              <Row><Label htmlFor="od" $w={56}>Počet OD:</Label><Field id="od" $w={41} $bg={face} $right readOnly defaultValue="2" /></Row>
              <Row><Label htmlFor="flat" $w={56}>Paušály :</Label><Field id="flat" $w={41} $bg={face} $right readOnly defaultValue="0" /></Row>
            </SideTotals>
          </Totals>
        </Section>
        <Section>
          <SectionBar>
            {tools([["Lůžko", <Bed />], ["Křivka", <LineChart />], ["Peníze", <Money />], ["Účet", <PhonePaper />]])}
            <h2 data-center=""><u>V</u>ýkony</h2>
          </SectionBar>
          <GridFrame><Grid columns={actColumns} rows={actRows} /></GridFrame>
        </Section>
      </TabPane>

      <NoteStrip><Label htmlFor="note" $w={60}>Poznámka:</Label><Field id="note" data-grow="" /></NoteStrip>
      <ActionBar>
        <ActionButton><Door />Konec</ActionButton>
        <ActionButton $color="#f00"><Question />Nápověda</ActionButton>
        <ActionButton disabled><Disk />{"Uložit  F2"}</ActionButton>
        <ActionButton><NewPage />{"Nový  F3"}</ActionButton>
        <ActionButton><Edit color="#f00" />{"Oprava  F4"}</ActionButton>
        <ActionButton><Edit color="#00f" />Přeúčtovat</ActionButton>
        <ActionButton><Correct />Korekce</ActionButton>
      </ActionBar>
      <StatusBar />

      <TaskBar>
        <StartButton><Flag />Start</StartButton>
        <QuickLaunch><RedBall /><DesktopIcon /><Explorer /><span>»</span></QuickLaunch>
        <Tasks>
          <Task $active><Akord /><span>Databáze (AKORD)...</span></Task>
          <Task><SkypeIcon /><span>Skype™ - kvetinka...</span></Task>
          <Task><Folder /><span><b>4</b> Průzkumník Win...</span><i /></Task>
          <Task><Office kind="excel" /><span><b>5</b> Microsoft Office...</span><i /></Task>
          <Task><Office kind="ppt" /><span>primářská_29.1.20...</span></Task>
          <Task><Office kind="outlook" /><span><b>2</b> Microsoft Office...</span><i /></Task>
        </Tasks>
        <Language><span>CS</span></Language>
        <Tray>
          <TrayArrow aria-label="Skryté ikony"><Chevron left color="#fff" /></TrayArrow>
          <Office kind="outlook" /><CheckBall /><Network /><Puzzle />
          <time>14:12</time>
        </Tray>
      </TaskBar>
    </Screen>
  );
}
